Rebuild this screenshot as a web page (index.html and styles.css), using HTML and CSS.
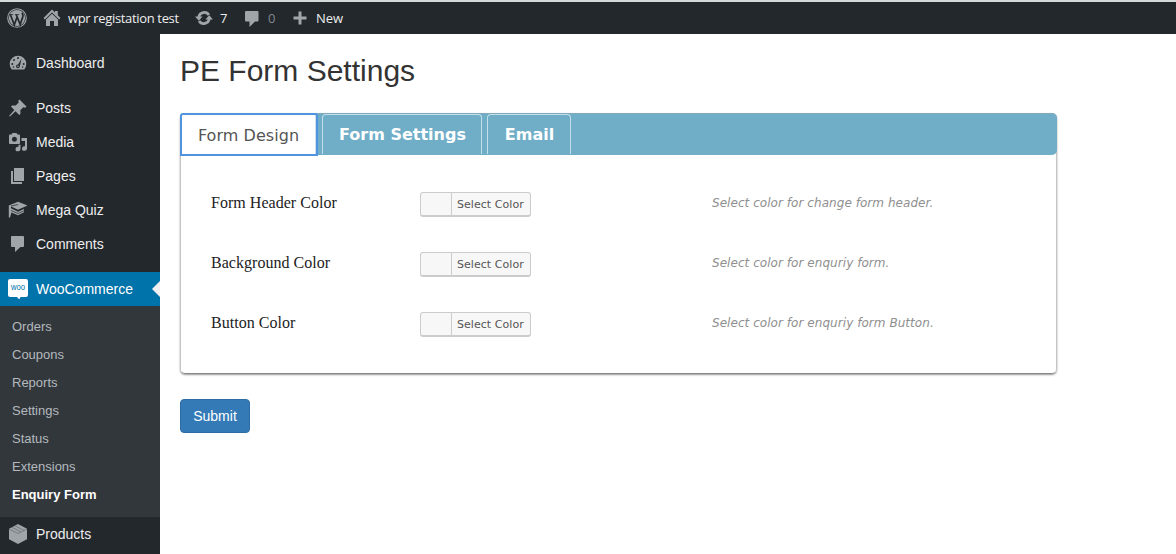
FILE: index.html
```html
<!DOCTYPE html>
<html lang="en">
<head>
<meta charset="utf-8">
<title>PE Form Settings</title>
<link rel="stylesheet" href="styles.css">
</head>
<body>
<header class="adminbar">
  <svg class="bar-icon logo" width="20" height="20" viewBox="0 0 20 20"><circle cx="10" cy="10" r="9.300" fill="none" stroke="currentColor" stroke-width="1.100"/><circle cx="10" cy="10" r="8.100" fill="currentColor"/><path fill="none" stroke="#23282d" stroke-width="1.700" d="m3.300 6.500 4 10.300L10.100 9M9.200 6.500l4 10 2.600-7.600q.5-2-.8-4.200"/><path fill="none" stroke="#23282d" stroke-width=".8" d="M2.500 6.600h3.800M8 6.600h4.200"/></svg>
  <svg class="bar-icon home" width="18" height="18" viewBox="0 0 18 18"><path fill="currentColor" d="m9 .500 3 3V2h2.800v4.300L17.500 9l-1.400 1.400L9 3.500l-7.100 6.900L.500 9zM9 4.700l6 5.800V17h-4v-5H7v5H3v-6.500z"/></svg>
  <span class="bar-text site">wpr registation test</span>
  <svg class="bar-icon update" width="18" height="18" viewBox="0 0 18 18"><path fill="none" stroke="currentColor" stroke-width="2.700" d="M3.700 8A5.600 5.600 0 0 1 13.900 6M14.300 10A5.600 5.600 0 0 1 4.100 12"/><path fill="currentColor" d="M0 7.500h7.600L3.800 11.700zM18 10.500h-7.600L14.200 6.300z"/></svg>
  <span class="bar-text count">7</span>
  <svg class="bar-icon bubble" width="16" height="18" viewBox="0 0 16 18"><path fill="currentColor" d="M2 2h11.500q1 0 1 1v8.500q0 1-1 1H11L5.500 18v-5.500H2q-1 0-1-1V3q0-1 1-1z"/></svg>
  <span class="bar-text zero">0</span>
  <svg class="bar-icon plus" width="14" height="14" viewBox="0 0 14 14"><path fill="currentColor" d="M5.500.500h3v5h5v3h-5v5h-3v-5h-5v-3h5z"/></svg>
  <span class="bar-text">New</span>
</header>
<div class="layout">
  <nav class="sidebar">
    <a class="item"><svg width="20" height="20" viewBox="0 0 20 20"><path fill="currentColor" d="M3.800 16.500A8.300 8.300 0 1 1 16.200 16.500z"/><g fill="#23282d"><circle cx="10" cy="5" r="1"/><circle cx="6" cy="7" r="1"/><circle cx="4.300" cy="11" r="1"/><circle cx="15.700" cy="11" r="1"/><circle cx="5.500" cy="14" r=".8"/><circle cx="14.600" cy="14" r=".8"/><path d="m13.600 5.400-1.800 8a1.900 1.900 0 1 1-1.700-2z"/></g><circle cx="10" cy="13.200" r=".8" fill="currentColor"/></svg><span>Dashboard</span></a>
    <div class="gap"></div>
    <a class="item"><svg width="20" height="20" viewBox="0 0 20 20"><path fill="currentColor" d="m11.500 1.500 7 7-1.300 1.200-1.900-.5-3 3 .2 3.600-1.300 1.200-3.700-3.700L2 18.600l-.9-.7 5.200-5.800L2.900 8.600l1.400-1.200 3.400.2 3-3-.5-1.900z"/></svg><span>Posts</span></a>
    <a class="item"><svg width="20" height="20" viewBox="0 0 20 20"><path fill="currentColor" fill-rule="evenodd" d="M2 2.500h1.500L4.500 1h4l1 1.500H11q1 0 1 1v7.500q0 1-1 1H2q-1 0-1-1V3.500q0-1 1-1zm4.500 2.200a2.500 2.500 0 1 0 0 5 2.500 2.500 0 0 0 0-5z"/><path fill="currentColor" d="M13.500 6H19v10.500a2.500 2.300 0 1 1-2-2.200V9h-3.500zM12.500 12.700v4.300a2.500 2.300 0 1 1-2-2.200v-2.100z"/></svg><span>Media</span></a>
    <a class="item"><svg width="20" height="20" viewBox="0 0 20 20"><path fill="currentColor" d="M6 2h10v13H6zM3 5h2v11h9v2H3z"/></svg><span>Pages</span></a>
    <a class="item"><svg width="20" height="20" viewBox="0 0 20 20"><path fill="currentColor" d="m10 1.700 9.500 3.900L10 9.800 3 6.500v1.700l7 3.500 6-2.600v3.100l-6 3-6.500-2.800L2 17.500H.800V5.400z"/><path fill="none" stroke="#23282d" stroke-width=".7" d="m3 6 7-1.500M3 10.500l7 3 6-2.700"/></svg><span>Mega Quiz</span></a>
    <a class="item"><svg width="20" height="20" viewBox="0 0 20 20"><path fill="currentColor" d="M4 2h11q1 0 1 1v9q0 1-1 1h-2.500L7 18v-5H4q-1 0-1-1V3q0-1 1-1z"/></svg><span>Comments</span></a>
    <div class="gap"></div>
    <a class="item active"><svg width="20" height="20" viewBox="0 0 20 20"><path fill="#fff" d="M2 0h16q2 0 2 2v14q0 2-2 2h-5.500l-1.200 2.500L9 18H2q-2 0-2-2V2Q0 0 2 0z"/><text x="10" y="11" text-anchor="middle" textLength="14" lengthAdjust="spacingAndGlyphs" class="woo">woo</text></svg><span>WooCommerce</span></a>
    <div class="submenu">
      <a>Orders</a><a>Coupons</a><a>Reports</a><a>Settings</a><a>Status</a><a>Extensions</a><a class="current">Enquiry Form</a>
    </div>
    <a class="item"><svg width="20" height="20" viewBox="0 0 20 20"><path fill="currentColor" d="m10 0 9 4.700v10.600L10 20l-9-4.700V4.700z"/><path fill="none" stroke="#6c7075" stroke-width=".8" d="m1 5 9 4.500L19 5M4 3.300l9 4.600M7 1.800l9 4.600"/></svg><span>Products</span></a>
  </nav>
  <main class="content">
    <h1>PE Form Settings</h1>
    <section class="panel">
      <div class="tabs">
        <a class="tab selected"><span>Form Design</span></a>
        <a class="tab second"><span>Form Settings</span></a>
        <a class="tab third"><span>Email</span></a>
      </div>
      <div class="rows">
        <div class="row"><label>Form Header Color</label><button class="picker"><span>Select Color</span></button><em>Select color for change form header.</em></div>
        <div class="row"><label>Background Color</label><button class="picker"><span>Select Color</span></button><em>Select color for enquriy form.</em></div>
        <div class="row"><label>Button Color</label><button class="picker"><span>Select Color</span></button><em>Select color for enquriy form Button.</em></div>
      </div>
    </section>
    <button class="submit">Submit</button>
  </main>
</div>
</body>
</html>
```
FILE: styles.css
```css
* { box-sizing: border-box; }
body { margin: 0; height: 554px; overflow: hidden; background: #fff; font-family: "Liberation Sans", Arial, sans-serif; }
svg { flex: none; display: block; }
.adminbar { height: 34px; padding: 0 0 0 7px; border-top: 2px solid #d3d8d9; background: #23282d; color: #a0a5aa; display: flex; align-items: center; font: 13px/30px "Open Sans", "Noto Sans", sans-serif; white-space: nowrap; }
.bar-text { color: #eee; margin-top: -1px; }
.home { margin-left: 16px; margin-right: 7px; }
.site { width: 127px; letter-spacing: -0.34px; }
.count { margin-left: 7px; width: 24px; }
.zero { color: #82878c; margin-left: 8px; width: 25px; }
.plus { margin-right: 9px; }
.layout { display: flex; height: 520px; }
.sidebar { width: 160px; flex: none; padding-top: 12px; background: #23282d; }
.item { height: 34px; padding-left: 8px; display: flex; align-items: center; gap: 8px; font-size: 14px; color: #a0a5aa; position: relative; }
.item span { color: #eee; }
.gap { height: 11px; }
.active { background: #0073aa; }
.active span { color: #fff; }
.active::after { content: ""; position: absolute; right: 0; top: 9px; border: 8px solid transparent; border-left: 0; border-right-color: #f1f1f1; }
.woo { font: 9.500px "Liberation Sans", sans-serif; fill: #0073aa; }
.submenu { height: 211px; padding: 7px 12px 0; background: #32373c; display: flex; flex-direction: column; }
.submenu a { height: 28px; line-height: 28px; font-size: 13px; color: #b4b9be; }
.submenu .current { color: #fff; font-weight: bold; }
.content { flex: 1; padding: 20px 0 0 20px; }
h1 { margin: 0; height: 59px; font-size: 30px; font-weight: normal; line-height: 33px; color: #333; }
.panel { width: 877px; height: 261px; border-radius: 5px; border: 1px solid #c5c5c5; border-top: 0; border-bottom-color: #888; box-shadow: 0 1px 2px #999; font-family: Verdana, "DejaVu Sans", sans-serif; }
.tabs { height: 42px; margin: 0 -1px; border-radius: 5px; background: #70adc7; border-top: 1px solid #82a9bc; display: flex; }
.tab { height: 40px; border: 1px solid #c3dfe9; border-bottom: 0; border-radius: 4px 4px 0 0; color: #fff; font-size: 16px; font-weight: bold; line-height: 40px; text-align: center; white-space: nowrap; }
.selected { width: 138px; height: 43px; border: 2px solid #5094e0; border-radius: 3px 3px 0 0; background: #fff; color: #555; font-weight: normal; margin-right: 4px; margin-top: -1px; line-height: 41px; padding-right: 1px; letter-spacing: 0.05px; box-shadow: inset -1px 0 #cfdfed; }
.second { width: 160px; margin-right: 5px; padding-left: 1px; }
.third { width: 84px; padding-left: 1px; }
.rows { padding: 17px 0 0 30px; }
.row { height: 60px; display: grid; grid-template-columns: 209px 292px 1fr; align-items: center; }
.row label { font: 16px/20px "Liberation Serif", serif; color: #222; margin-top: 1px; letter-spacing: 0.03px; }
.row em { font-size: 12px; color: #8f8f8f; white-space: nowrap; margin-top: 2px; letter-spacing: 0.05px; }
.picker { width: 111px; height: 25px; padding: 0 0 0 30px; margin-top: 4px; border: 1px solid #ccc; border-bottom-width: 2px; border-radius: 3px; background: #f7f7f7; color: #555; font: 11px/22px "DejaVu Sans", sans-serif; white-space: nowrap; }
.picker span { display: block; height: 22px; line-height: 23px; border-left: 1px solid #ccc; text-align: left; padding-left: 5px; letter-spacing: 0.05px; }
.submit { display: block; margin-top: 25px; width: 70px; height: 34px; padding: 0; border: 1px solid #2e6da4; border-radius: 4px; background: #337ab7; color: #fff; font: 14px "Liberation Sans", Arial, sans-serif; }
```
